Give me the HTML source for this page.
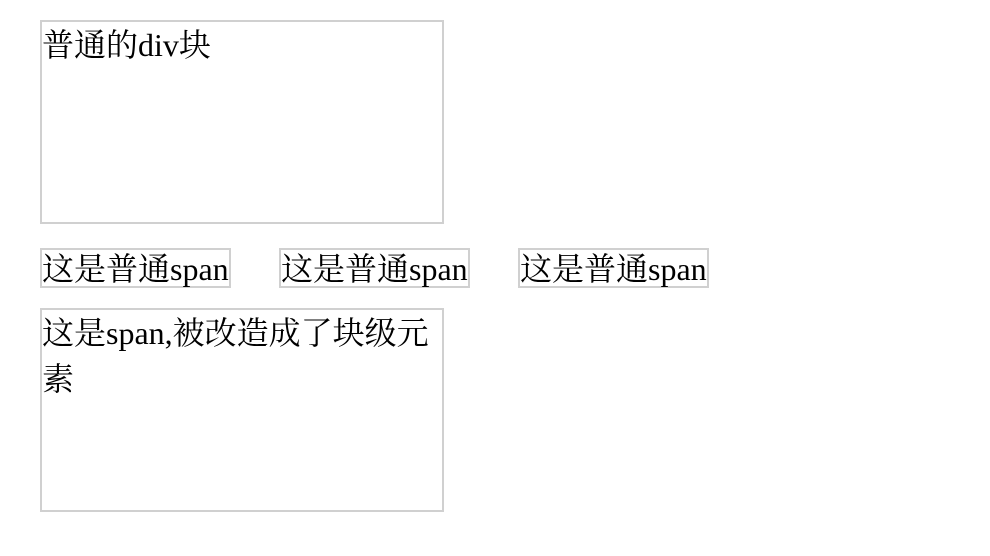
<!DOCTYPE html>
<html><head><meta charset="utf-8"><style>
body{margin:0;background:#fff;font-family:"Liberation Serif","Noto Serif CJK SC",serif;font-size:32px;color:#000}
.b{position:absolute;left:40px;width:400px;height:200px;border:2px solid #d0d0d0;line-height:46px}
.s{position:absolute;top:248px;height:36px;line-height:38px;border:2px solid #d0d0d0;white-space:nowrap}
</style></head><body>
<div class="b" style="top:20px">普通的div块</div>
<span class="s" style="left:40px">这是普通span</span>
<span class="s" style="left:279px">这是普通span</span>
<span class="s" style="left:518px">这是普通span</span>
<div class="b" style="top:308px">这是span,被改造成了块级元素</div>
</body></html>
